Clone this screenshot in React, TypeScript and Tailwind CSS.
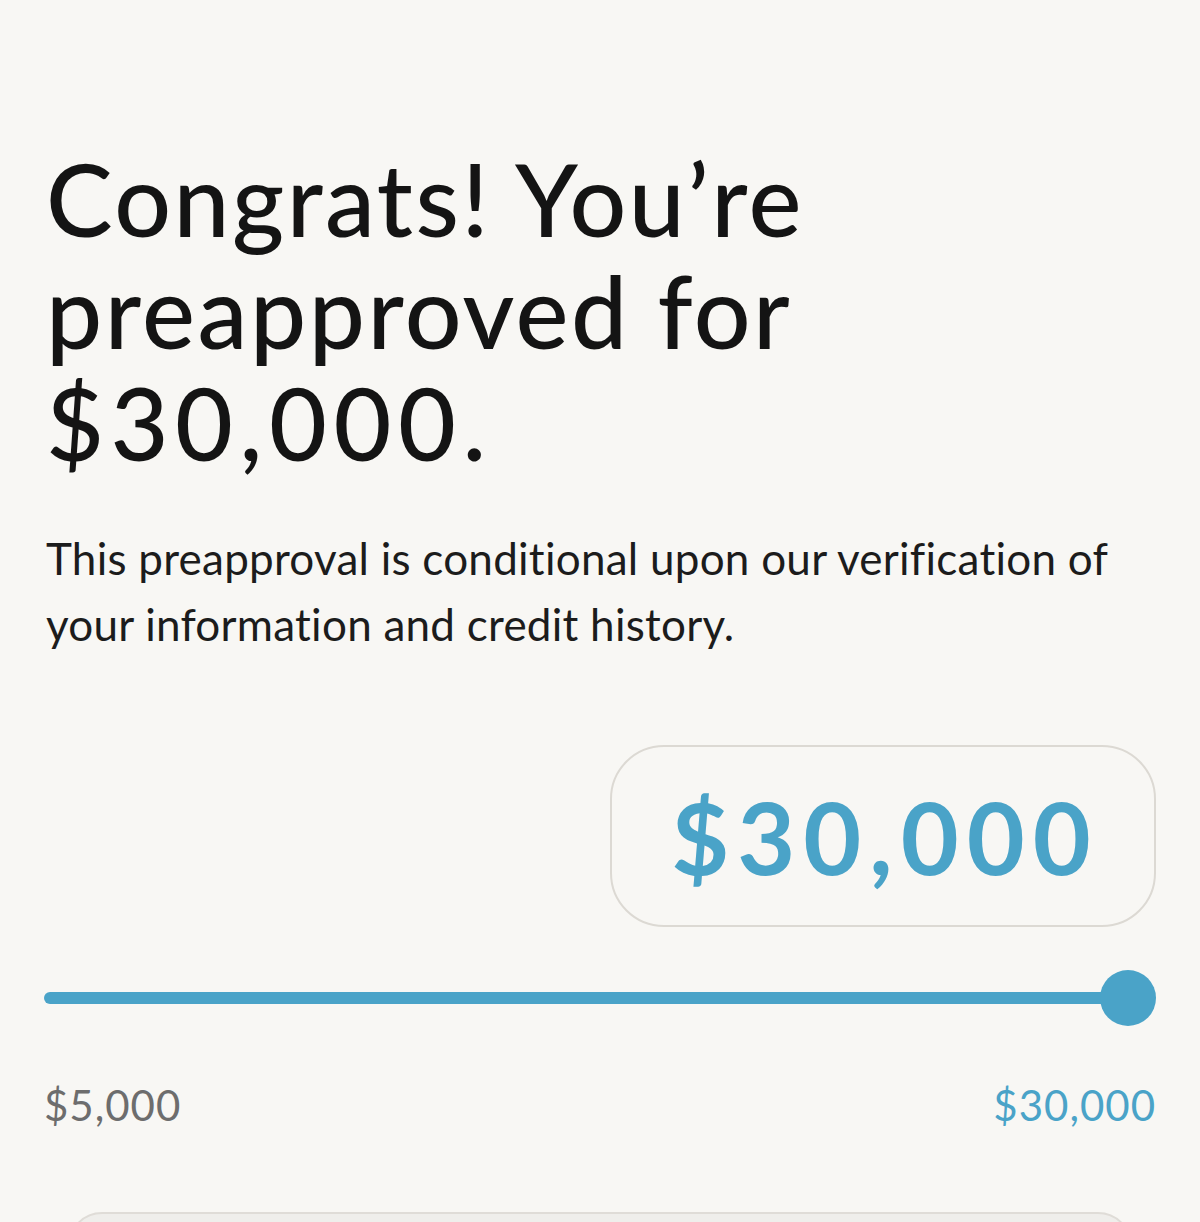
import { useState } from 'react'

export default function App() {
  const [amount] = useState(30000)
  const min = 5000
  const max = 30000
  const pct = ((amount - min) / (max - min)) * 100
  const fmt = (n: number) => '$' + n.toLocaleString('en-US')

  return (
    <div className="h-[1222px] bg-[#f8f7f4] text-[#141414] overflow-hidden [font-variant-ligatures:none]" style={{ fontFamily: 'Lato, "Noto Sans", sans-serif' }}>
      <div className="pl-[46px] pr-[44px] pt-[142px]">
        {/* Heading */}
        <h1 className="text-[100px] leading-[112px] font-medium tracking-[2.5px] w-[820px]">
          Congrats! You’re preapproved for <span className="tracking-[6.5px]">{fmt(amount)}.</span>
        </h1>

        {/* Disclaimer */}
        <p className="mt-[47px] text-[44px] leading-[66px] tracking-[0.25px] text-[#1c1c1c]">
          This preapproval is conditional upon our verification of your information and credit history.
        </p>

        {/* Amount box */}
        <div className="mt-[88px] flex justify-end">
          <div className="w-[546px] h-[182px] rounded-[54px] border-2 border-[#dcd9d3] flex items-center justify-center">
            <span className="text-[100px] font-bold text-[#4aa3c8] tracking-[8px] pl-[4px]">{fmt(amount)}</span>
          </div>
        </div>

        {/* Slider */}
        <div className="mt-[42px] relative h-[56px] -ml-[2px]">
          <div className="absolute left-0 top-[23px] h-[12px] rounded-full bg-[#4aa3c8]" style={{ width: `calc(${pct}% - 28px)` }} />
          <div
            className="absolute top-[1px] w-[56px] h-[56px] rounded-full bg-[#4aa3c8]"
            style={{ left: `calc(${pct}% - 56px)` }}
          />
        </div>

        {/* Range labels */}
        <div className="mt-[56px] -ml-[2px] flex justify-between text-[42px] leading-[48px] tracking-[1px]">
          <span className="text-[#6d6d6d]">{fmt(min)}</span>
          <span className="text-[#4aa3c8]">{fmt(max)}</span>
        </div>
      </div>

      {/* Bottom card peeking */}
      <div className="mt-[83px] mx-[68px] h-[80px] rounded-t-[34px] border-2 border-[#dfdcd7] bg-[#efeeeb]" />
    </div>
  )
}
